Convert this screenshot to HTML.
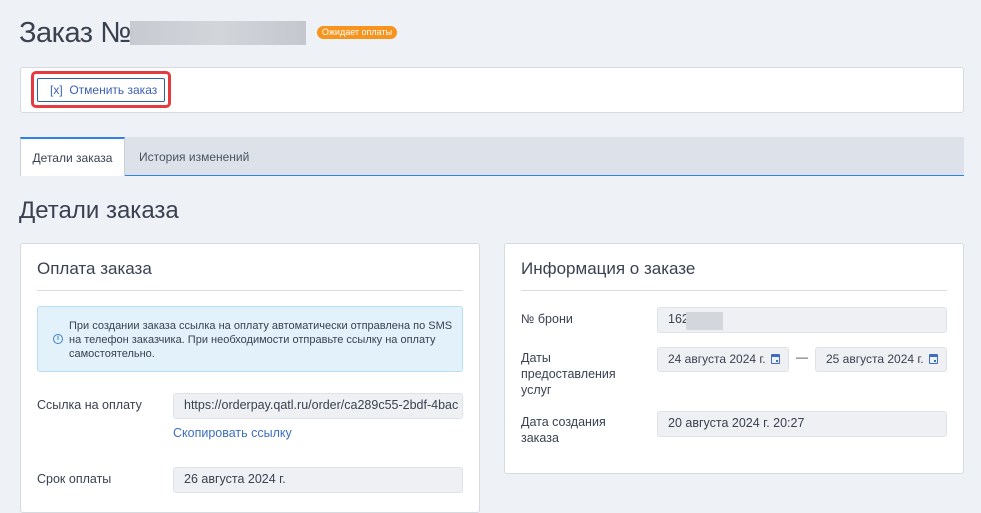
<!DOCTYPE html><html><head><meta charset="utf-8"><style>
*{box-sizing:border-box;margin:0;padding:0}
body{width:981px;height:500px;overflow:hidden;background:#eef1f5;font-family:"Liberation Sans","DejaVu Sans",sans-serif;color:#3a4150;position:relative}
.a{position:absolute}
.card{position:absolute;background:#fff;border:1px solid #d6dbe2;border-radius:3px}
.inp{position:absolute;background:#eef0f3;border:1px solid #dfe3e8;border-radius:3px;font-size:12.5px;color:#3a4150;padding-left:10px;line-height:23px;white-space:nowrap;overflow:hidden}
.lbl{position:absolute;font-size:12.5px;color:#3a4150;line-height:16px}
.cal{position:absolute;width:9px;height:10px;border:1.5px solid #3b6ec0;border-top-width:3px;border-radius:1px}
.cal:after{content:"";position:absolute;right:1px;bottom:1px;width:2px;height:2px;background:#3b6ec0}
</style></head><body>
<div class="a" style="left:19px;top:17px;font-size:29px;color:#3a4150;letter-spacing:-0.5px">Заказ №</div>
<div class="a" style="left:130px;top:21px;width:176px;height:24px;background:linear-gradient(90deg,#c7cbd1,#d2d6db,#c4c8ce)"></div>
<div class="a" style="left:317px;top:26px;width:80px;height:13px;background:#f7941d;border-radius:7px;color:#fff;font-size:9px;line-height:13px;text-align:center">Ожидает оплаты</div>
<div class="card" style="left:20px;top:67px;width:944px;height:46px"></div>
<div class="a" style="left:31px;top:71px;width:140px;height:37px;border:3px solid #e53a3f;border-radius:5px"></div>
<div class="a" style="left:37px;top:78px;width:128px;height:24px;border:1px solid #2d5fb0;border-radius:2px;color:#3a5fb0;font-size:12px;line-height:22px;padding-left:12px">[x]&nbsp; Отменить заказ</div>
<div class="a" style="left:20px;top:137px;width:944px;height:39px;background:#dde2ea;border-bottom:1px solid #2f80ed"></div>
<div class="a" style="left:20px;top:137px;width:105px;height:39px;background:#fff;border:1px solid #c9d0da;border-top:2px solid #2f80ed;border-bottom:none;font-size:12px;line-height:38px;text-align:center">Детали заказа</div>
<div class="a" style="left:139px;top:137px;font-size:12px;line-height:40px;color:#4a5260">История изменений</div>
<div class="a" style="left:19px;top:197px;font-size:24px">Детали заказа</div>
<div class="card" style="left:20px;top:243px;width:460px;height:270px"></div>
<div class="a" style="left:37px;top:259px;font-size:17px">Оплата заказа</div>
<div class="a" style="left:37px;top:290px;width:426px;height:1px;background:#d6dbe2"></div>
<div class="a" style="left:37px;top:306px;width:426px;height:66px;background:#e3f1fb;border:1px solid #b9ddf3;border-radius:3px"></div>
<div class="a" style="left:53px;top:334px;width:10px;height:10px;border:1.3px solid #3b7fd0;border-radius:50%;font-size:7px;color:#3b7fd0;text-align:center;line-height:8px;font-weight:bold">i</div>
<div class="a" style="left:69px;top:319px;font-size:11px;line-height:14px;width:392px;color:#3a4150">При создании заказа ссылка на оплату автоматически отправлена по SMS на телефон заказчика. При необходимости отправьте ссылку на оплату самостоятельно.</div>
<div class="lbl" style="left:37px;top:397px">Ссылка на оплату</div>
<div class="inp" style="left:173px;top:393px;width:290px;height:26px">https://orderpay.qatl.ru/order/ca289c55-2bdf-4bac</div>
<div class="a" style="left:173px;top:426px;font-size:12.5px;color:#3b6ec0">Скопировать ссылку</div>
<div class="lbl" style="left:37px;top:471px">Срок оплаты</div>
<div class="inp" style="left:173px;top:467px;width:290px;height:26px">26 августа 2024 г.</div>
<div class="card" style="left:504px;top:243px;width:460px;height:231px"></div>
<div class="a" style="left:521px;top:259px;font-size:17px">Информация о заказе</div>
<div class="a" style="left:521px;top:290px;width:426px;height:1px;background:#d6dbe2"></div>
<div class="lbl" style="left:521px;top:311px">№ брони</div>
<div class="inp" style="left:657px;top:307px;width:290px;height:26px">162</div>
<div class="a" style="left:686px;top:312px;width:37px;height:18px;background:#d3d6db"></div>
<div class="lbl" style="left:521px;top:350px">Даты<br>предоставления<br>услуг</div>
<div class="inp" style="left:657px;top:347px;width:132px;height:25px;font-size:12px">24 августа 2024 г.</div>
<div class="cal" style="left:771px;top:354px"></div>
<div class="a" style="left:796px;top:350px;font-size:12px">—</div>
<div class="inp" style="left:815px;top:347px;width:132px;height:25px;font-size:12px">25 августа 2024 г.</div>
<div class="cal" style="left:929px;top:354px"></div>
<div class="lbl" style="left:521px;top:414px">Дата создания<br>заказа</div>
<div class="inp" style="left:657px;top:411px;width:290px;height:26px">20 августа 2024 г. 20:27</div>
</body></html>
